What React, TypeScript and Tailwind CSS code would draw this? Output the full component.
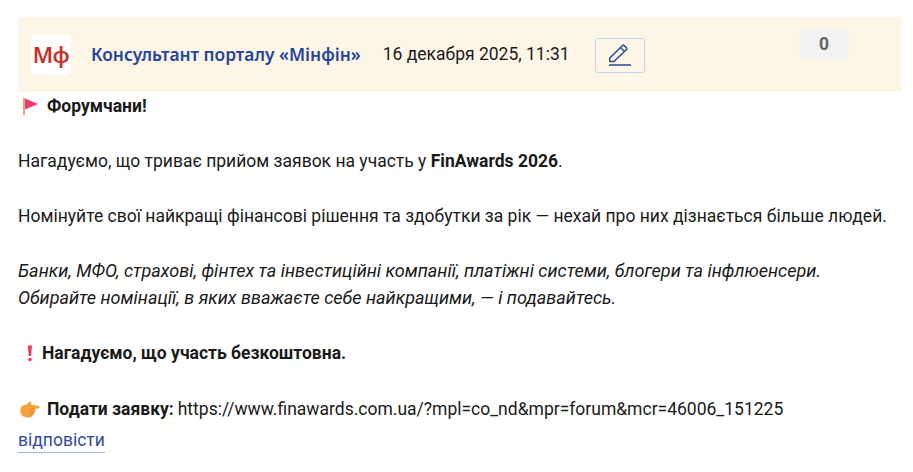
const roboto = "font-['Roboto',sans-serif]";

function Flag() {
  return (
    <svg width="16" height="18" viewBox="0 0 16 18" className="shrink-0">
      <rect x="0" y="0" width="2" height="17" fill="#e8a184" />
      <path d="M2 0.5 L15 6 L2 11.5 Z" fill="#f4396f" />
    </svg>
  );
}

function Exclamation() {
  return (
    <svg width="6" height="17" viewBox="0 0 6 17" className="shrink-0">
      <path d="M0.8 0.5 H5 L4 11 H1.8 Z" fill="#f4395f" />
      <circle cx="2.9" cy="14.6" r="1.8" fill="#f4395f" />
    </svg>
  );
}

function PointingHand() {
  return (
    <svg width="20" height="17" viewBox="0 0 20 17" className="shrink-0">
      <path d="M0.3 9 C0.5 5 3.5 3.8 6.5 3.8 L9 1 C10 0 11.6 0.6 11.1 2 L10.6 3.8 L18 4.8 C20 5.2 20 7.6 18 7.6 L15 7.7 C15.6 9.4 15 10.6 14.4 11.2 C14.4 12.6 13.8 13.3 13 13.7 C12.6 15.6 10.4 16.6 8 16.6 C3.5 16.6 0 14 0.3 9 Z" fill="#f5a23b" />
      <path d="M10.5 7.7 L15 7.7 M10 11.2 L14.4 11.2 M9.5 13.7 L13 13.7" stroke="#d9822b" strokeWidth="0.8" fill="none" />
    </svg>
  );
}

function PencilLine() {
  return (
    <svg width="22" height="22" viewBox="0 0 22 22" fill="none" stroke="#2a4a9c" strokeWidth="1.5">
      <path d="M0.8 17.5 V14 L13.5 1.5 C14 1 14.6 1 15 1.4 L17.6 4 C18 4.4 18 5 17.5 5.5 L5 17.5 Z" strokeLinejoin="round" />
      <path d="M11.5 3.5 L15.5 7.5" />
      <path d="M0 21 H22" strokeWidth="2" stroke="#5c72b0" />
    </svg>
  );
}

export default function App() {
  return (
    <div className={`w-[913px] h-[472px] bg-white overflow-hidden pt-[17px] pl-[18px] pr-[12px] text-[17.5px] leading-[27.5px] text-[#1a1a1a] ${roboto}`}>
      <div className="relative h-[75px] mb-[1px] bg-[#fdf5e6] flex items-center pl-[13px]">
        <div className="w-10 h-10 bg-white rounded flex items-center justify-center shrink-0">
          <span className="font-['Noto_Sans',sans-serif] font-semibold text-[22px] text-[#c9302c] tracking-[-0.5px]">Мф</span>
        </div>
        <a className="ml-5 font-['Noto_Sans',sans-serif] font-semibold text-[17.35px] text-[#24459b]">Консультант порталу «Мінфін»</a>
        <span className="ml-[22px]">16 декабря 2025, 11:31</span>
        <button className="ml-[25px] w-[50px] h-[35px] mt-[1px] border border-[#c5d3f2] rounded-[3px] flex items-center justify-center">
          <PencilLine />
        </button>
        <div className="absolute left-[781px] top-[12px] w-[50px] h-[30px] pt-[1px] bg-[#f2f2f2] rounded-md flex items-center justify-center font-bold text-[#666666]">0</div>
      </div>

      <p className="flex items-center gap-[8px] pl-[5px] h-[27.5px] font-bold">
        <Flag />
        <span>Форумчани!</span>
      </p>
      <div className="h-[27.5px]" />
      <p>Нагадуємо, що триває прийом заявок на участь у <b>FinAwards 2026</b>.</p>
      <div className="h-[27.5px]" />
      <p>Номінуйте свої найкращі фінансові рішення та здобутки за рік — нехай про них дізнається більше людей.</p>
      <div className="h-[26px]" />
      <p className="italic text-[18.05px]">Банки, МФО, страхові, фінтех та інвестиційні компанії, платіжні системи, блогери та інфлюенсери.</p>
      <p className="italic text-[18.05px]">Обирайте номінації, в яких вважаєте себе найкращими, — і подавайтесь.</p>
      <div className="h-[28px]" />
      <p className="flex items-center gap-[9px] pl-[9px] h-[27.5px] font-bold">
        <Exclamation />
        <span>Нагадуємо, що участь безкоштовна.</span>
      </p>
      <div className="h-[28.5px]" />
      <p className="flex items-center pl-[2px] h-[27.5px]">
        <PointingHand />
        <b className="ml-[7px]">Подати заявку:</b>
        <span className="ml-[4px]">https://www.finawards.com.ua/?mpl=co_nd&amp;mpr=forum&amp;mcr=46006_151225</span>
      </p>
      <a className="block w-fit h-[25px] text-[#2f4a9e] border-b border-[#9fb0dc] leading-[25px] mt-[5px]">відповісти</a>
    </div>
  );
}
